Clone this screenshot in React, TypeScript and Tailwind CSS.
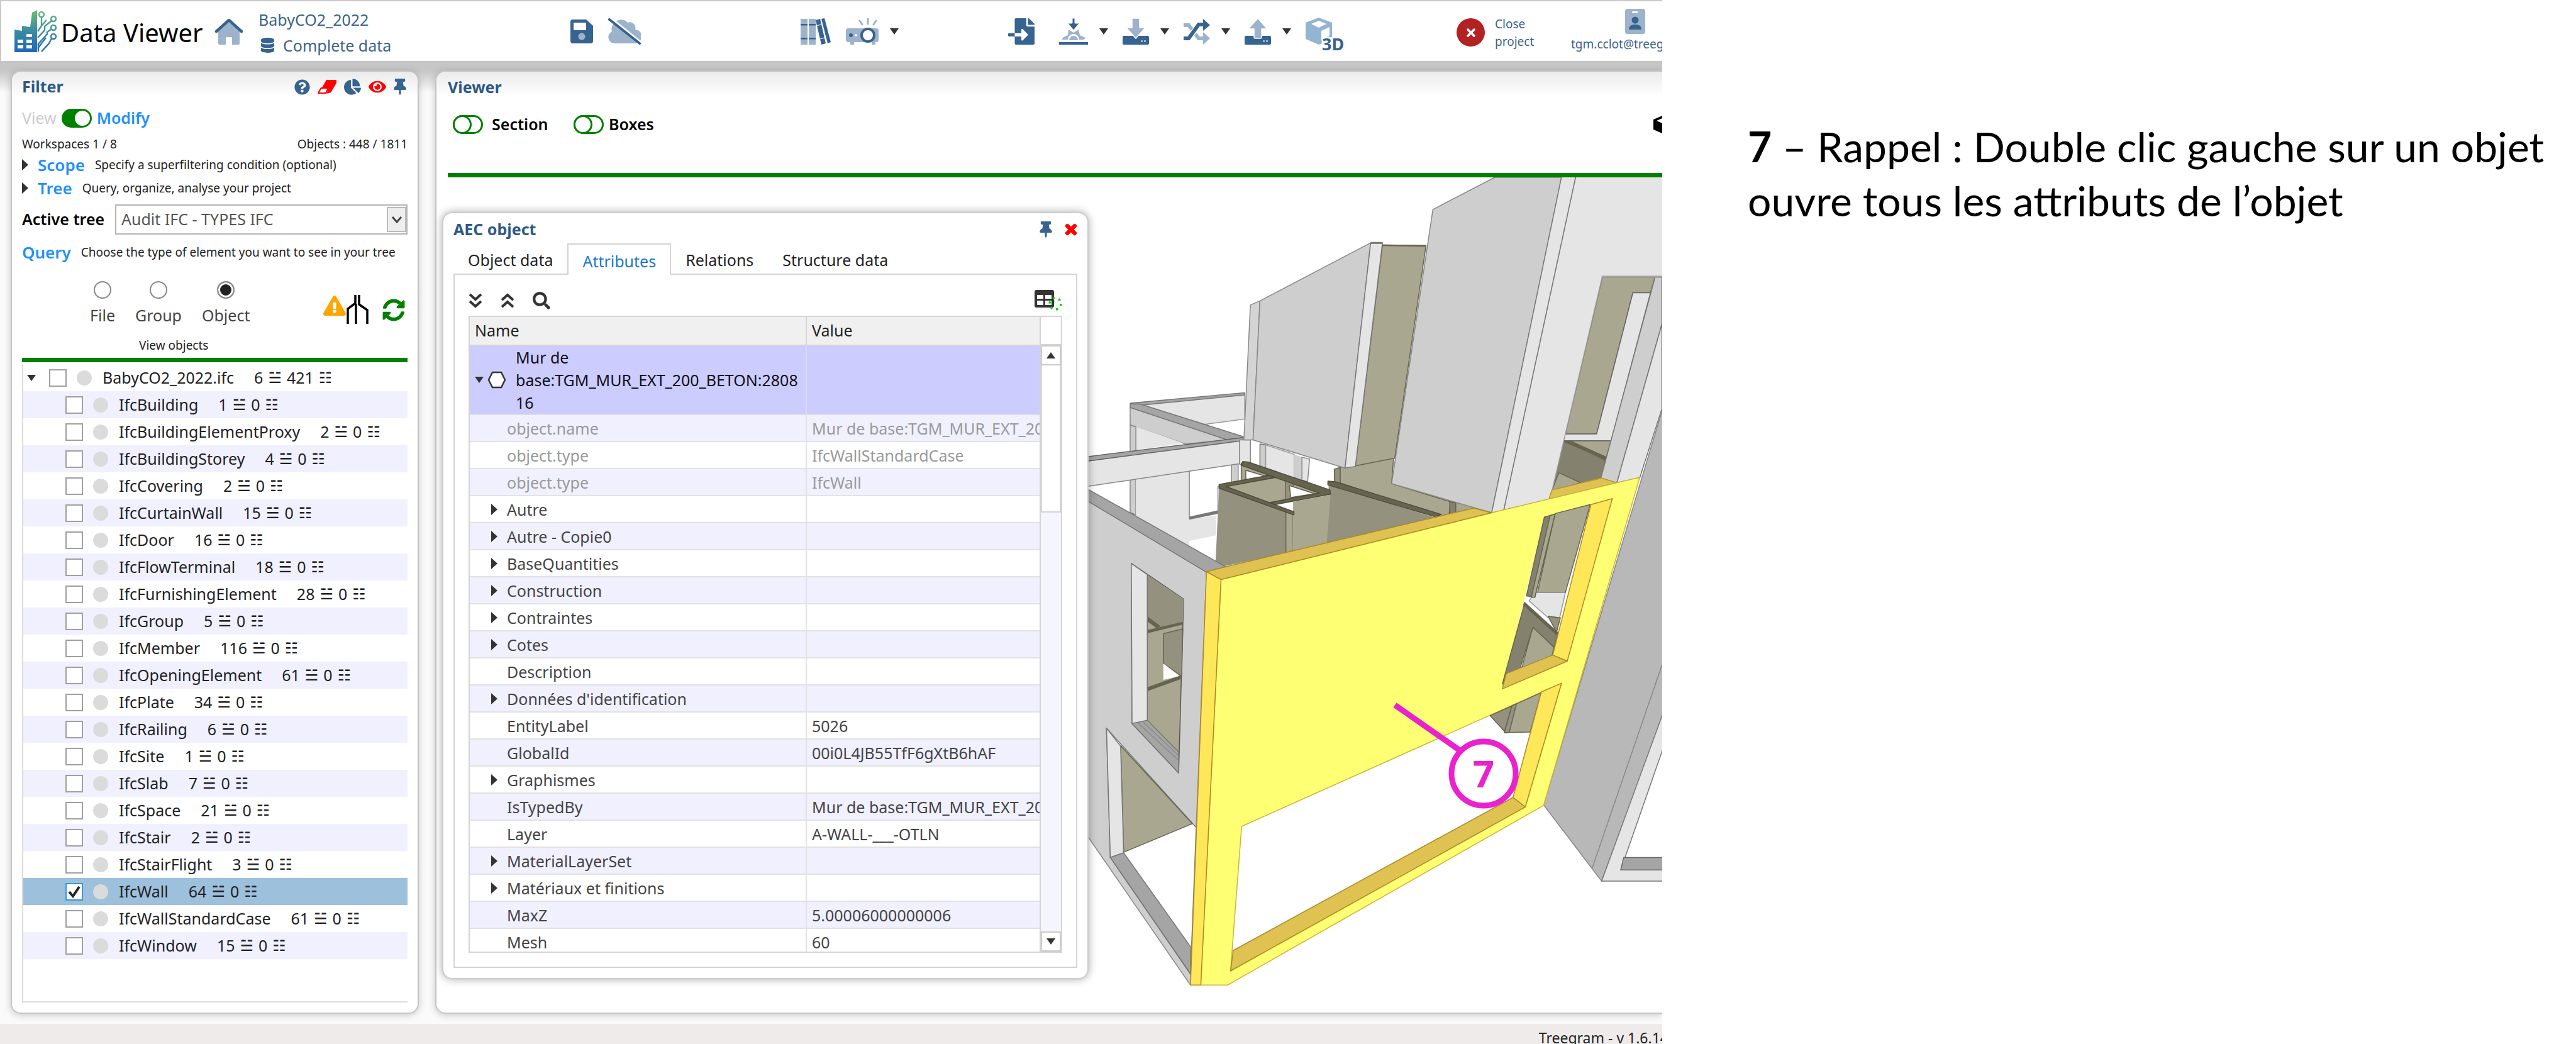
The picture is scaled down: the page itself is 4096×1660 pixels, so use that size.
import React from "react";
import { FaDatabase, FaFileImport, FaSyncAlt, FaQuestionCircle, FaChartPie, FaEye, FaThumbtack, FaExclamationTriangle, FaTimes, FaSearch } from "react-icons/fa";

const DARK = "#36638f";
const LIGHT = "#9db3cb";

/* ---------- icons ---------- */

function Logo() {
  return (
    <svg viewBox="0 0 68 67" className="h-[67px] w-[68px]" aria-hidden="true">
      <defs>
        <linearGradient id="brand" x1="0" y1="0" x2="0" y2="67" gradientUnits="userSpaceOnUse">
          <stop offset="0" stopColor="#6cc06a" />
          <stop offset="0.45" stopColor="#3f8fa0" />
          <stop offset="1" stopColor="#1f66b8" />
        </linearGradient>
      </defs>
      <path fill="url(#brand)" d="M0 31l12 2v-8l13 2L28 4l8-4v67H0z" />
      <path fill="#fff" d="M19 38h9v5h-9zM5 47h9v5H5zM19 47h9v5h-9zM5 56h9v5H5zM19 56h9v5h-9z" />
      <g fill="none" stroke="url(#brand)" strokeWidth="2.4">
        <path d="M37 34l6-9V11M43 25l8-9M37 44l11-12v-6l11-9M37 55l15-17v-3l7-5M37 61l13-17M43 66l12-13 4-8M38 66V52" />
        <circle cx="43" cy="7" r="4" />
        <circle cx="62" cy="14" r="4" />
        <circle cx="62" cy="28" r="4" />
        <circle cx="62" cy="42" r="4" />
      </g>
    </svg>
  );
}

function HomeIcon() {
  return (
    <svg viewBox="0 0 46 42" className="h-[42px] w-[46px]">
      <path fill={LIGHT} d="M6 20L23 6l17 14v20a2 2 0 0 1-2 2H28V30H18v12H8a2 2 0 0 1-2-2z" />
      <path fill="none" stroke={DARK} strokeWidth="4.5" strokeLinecap="round" strokeLinejoin="round" d="M3 21L23 3l20 18" />
    </svg>
  );
}

function SaveIcon() {
  return (
    <svg viewBox="0 0 36 38" className="h-[38px] w-9">
      <path fill={DARK} d="M4 0h21l11 10v24a4 4 0 0 1-4 4H4a4 4 0 0 1-4-4V4a4 4 0 0 1 4-4z" />
      <path fill="#fff" d="M5 5h20v12H5z" />
      <circle cx="18" cy="27" r="5.5" fill={LIGHT} />
    </svg>
  );
}

function CloudOffIcon() {
  return (
    <svg viewBox="0 0 52 42" className="h-[42px] w-[52px]">
      <path fill={LIGHT} d="M10 40a10 10 0 0 1-4-19A13 13 0 0 1 12 6a13 13 0 0 1 19 1 9 9 0 0 1 12 11 11 11 0 0 1-1 22z" />
      <path stroke="#fff" strokeWidth="3" d="M5 0l47 38" />
      <path stroke={DARK} strokeWidth="4" strokeLinecap="round" d="M2 2l48 38" />
    </svg>
  );
}

function BooksIcon() {
  return (
    <svg viewBox="0 0 48 42" className="h-[42px] w-12">
      <path fill={LIGHT} d="M0 1h11v41H0zM13 1h11v41H13z" />
      <path fill={DARK} d="M0 9h11v2.5H0zM13 9h11v2.5H13zM0 31h11v2.5H0zM13 31h11v2.5H13z" />
      <path fill={DARK} d="M24 3l7-2 9 39-7 2z" />
      <path fill={DARK} d="M33 1l5-1 10 38-5 2z" />
      <path stroke="#fff" strokeWidth="1" d="M26 12l6-2M31 33l7-2" />
    </svg>
  );
}

function ProjectorIcon() {
  return (
    <svg viewBox="0 0 52 42" className="h-[42px] w-[52px]">
      <path fill={LIGHT} d="M4 16h44a4 4 0 0 1 4 4v14a4 4 0 0 1-4 4h-1v4h-6v-4H13v4H7v-4H4a4 4 0 0 1-4-4V20a4 4 0 0 1 4-4z" />
      <circle cx="8" cy="27" r="3" fill={DARK} />
      <circle cx="16" cy="27" r="2" fill="#fff" />
      <circle cx="35" cy="27" r="10" fill="#fff" stroke={DARK} strokeWidth="4" />
      <path stroke={LIGHT} strokeWidth="3" strokeLinecap="round" d="M35 1v8M22 4l4 6M48 4l-4 6" />
    </svg>
  );
}

function CompressIcon() {
  return (
    <svg viewBox="0 0 46 42" className="h-[42px] w-[46px]">
      <path fill={LIGHT} d="M15 18l8 5 8-5 2 9 9 4-3 3H32a9 9 0 0 0-18 0H4l3-4 7-3z" />
      <path fill={LIGHT} d="M16 35a7 7 0 0 1 14 0z" />
      <path fill={DARK} stroke="#fff" strokeWidth="1" d="M21 0h4v8h7l-9 11-9-11h7z" />
      <path fill={DARK} d="M0 38h46v4H0z" />
    </svg>
  );
}

function DriveIcon({ up }: { up?: boolean }) {
  return (
    <svg viewBox="0 0 42 42" className="h-[42px] w-[42px]">
      <path fill={DARK} d="M2 28h38a2 2 0 0 1 2 2v10a2 2 0 0 1-2 2H2a2 2 0 0 1-2-2V30a2 2 0 0 1 2-2z" />
      {up ? (
        <path fill={LIGHT} stroke="#fff" strokeWidth="1.5" d="M21 0l15 17h-9v13a2 2 0 0 1-2 2h-8a2 2 0 0 1-2-2V17H6z" />
      ) : (
        <path fill={LIGHT} stroke="#fff" strokeWidth="1.5" d="M17 0h8a2 2 0 0 1 2 2v13h9L21 32 6 15h9V2a2 2 0 0 1 2-2z" />
      )}
      <path fill={LIGHT} d="M29 35h3v3h-3zM34 35h3v3h-3z" />
    </svg>
  );
}

function ShuffleIcon() {
  return (
    <svg viewBox="0 0 42 42" className="h-[42px] w-[42px]">
      <path fill="none" stroke={LIGHT} strokeWidth="6" d="M0 11h8l16 21h8" />
      <path fill={LIGHT} d="M31 22l11 10-11 10z" />
      <path fill="none" stroke="#fff" strokeWidth="9" d="M6 33l20-23" />
      <path fill="none" stroke={DARK} strokeWidth="6" d="M0 32h8l16-22h8" />
      <path fill={DARK} d="M31 1l11 10-11 9z" />
    </svg>
  );
}

function Cube3DIcon() {
  return (
    <svg viewBox="0 0 62 54" className="h-[54px] w-[62px]">
      <path fill="#93b4d3" d="M21 0l21 8v25l-21 10L0 34V8z" />
      <path fill="#fff" d="M21 5l12 5-12 6-12-6zM25 21l13-6v14l-13 7z" />
      <path fill="#fff" d="M25 31h37v23H27z" />
      <text x="26" y="52" fontFamily="'Noto Sans', sans-serif" fontWeight="700" fontSize="27" fill={DARK}>3D</text>
    </svg>
  );
}

function BadgeIcon() {
  return (
    <svg viewBox="0 0 32 40" className="h-10 w-8">
      <rect width="32" height="40" rx="4" fill={LIGHT} />
      <rect x="11" y="4" width="10" height="3" rx="1.5" fill="#fff" />
      <circle cx="16" cy="18" r="5.5" fill={DARK} />
      <path fill={DARK} d="M6 33c0-6 4-8 10-8s10 2 10 8z" />
    </svg>
  );
}

function EraserIcon() {
  return (
    <svg viewBox="0 0 30 22" className="h-[22px] w-[30px]">
      <path fill="#f00" d="M14 0h16l-8 14H6z" />
      <path fill="#fff" stroke="#f00" strokeWidth="2" strokeLinejoin="round" d="M5.500 13H17l-4 8H1z" />
      <path fill="#f00" d="M30 0v5l-9 15-7 2 4-9z" />
    </svg>
  );
}

function PipesIcon() {
  return (
    <svg viewBox="0 0 36 46" className="h-[46px] w-9" fill="none" stroke="#000" strokeWidth="3.5">
      <path d="M15 0v13L3 22v24M16 14v32M21 0v15l13 9v22" />
    </svg>
  );
}

function TableIcon() {
  return (
    <svg viewBox="0 0 44 34" className="h-[34px] w-11">
      <path fill="#333" fillRule="evenodd" d="M3 0h25a3 3 0 0 1 3 3v22a3 3 0 0 1-3 3H3a3 3 0 0 1-3-3V3a3 3 0 0 1 3-3zm1 8v6h10V8zm13 0v6h10V8zM4 17v7h10v-7zm13 0v7h10v-7z" />
      <circle cx="33" cy="22" r="9" fill="none" stroke="#13d313" strokeWidth="3.5" strokeDasharray="3.5 6" />
    </svg>
  );
}

function Chevrons({ up }: { up?: boolean }) {
  return (
    <svg viewBox="0 0 22 26" className="h-[26px] w-[22px]" fill="none" stroke="#333" strokeWidth="4">
      {up ? <path d="M2 12l9-8 9 8M2 23l9-8 9 8" /> : <path d="M2 3l9 8 9-8M2 14l9 8 9-8" />}
    </svg>
  );
}

function Arrow({ dir, className = "" }: { dir: "right" | "down" | "up"; className?: string }) {
  const d = dir === "right" ? "M2 0l10 9-10 9z" : dir === "down" ? "M0 4h14l-7 10z" : "M0 14h14L7 4z";
  return (
    <svg viewBox="0 0 14 18" className={"h-[18px] w-3.5 shrink-0 " + className} fill="#333">
      <path d={d} />
    </svg>
  );
}

function Switch({ label, on }: { label: string; on?: boolean }) {
  return (
    <>
      <input type="checkbox" role="switch" aria-label={label} defaultChecked={on} className="sr-only" />
      <svg viewBox="0 0 48 30" className="h-[30px] w-12 shrink-0">
        <rect x="1.5" y="1.5" width="45" height="27" rx="13.5" fill={on ? "#008000" : "#fff"} stroke="#008000" strokeWidth="3" />
        <circle cx={on ? 33 : 15} cy="15" r={on ? 12 : 13.5} fill="#fff" stroke={on ? "none" : "#008000"} strokeWidth="3" />
      </svg>
    </>
  );
}

/* ---------- header ---------- */

function Tool({ label, children, menu }: { label: string; children: React.ReactNode; menu?: boolean }) {
  return (
    <button type="button" aria-label={label} className="flex items-center gap-[18px]">
      {children}
      {menu && <Arrow dir="down" />}
    </button>
  );
}

function Header() {
  return (
    <header className="flex h-[97px] shrink-0 items-center overflow-hidden border-t-2 border-l-2 border-[#c9c9c9] bg-white text-[#3c648c]">
      <div className="flex w-[905px] shrink-0 items-center">
        <div className="ml-[21px] flex items-center gap-1.5">
          <Logo />
          <span className="w-[241px] pt-1 text-[40px] leading-[48px] whitespace-nowrap text-black">Data Viewer</span>
        </div>
        <button type="button" aria-label="Home" className="mr-[24px] ml-[3px]">
          <HomeIcon />
        </button>
        <div className="pt-1 text-[25px] leading-[41px]">
          <div>BabyCO2_2022</div>
          <div className="flex items-center gap-[14px] pl-1">
            <FaDatabase className="h-6 w-[21px]" color={DARK} />
            Complete data
          </div>
        </div>
      </div>
      <div className="flex w-[366px] shrink-0 items-center gap-6">
        <Tool label="Save"><SaveIcon /></Tool>
        <Tool label="Offline"><CloudOffIcon /></Tool>
      </div>
      <div className="flex w-[330px] shrink-0 items-center gap-6">
        <Tool label="Library"><BooksIcon /></Tool>
        <Tool label="Presentation" menu><ProjectorIcon /></Tool>
      </div>
      <div className="flex w-[713px] shrink-0 items-center gap-[23px]">
        <span className="mr-[16px] flex">
          <Tool label="Import file"><FaFileImport className="h-[42px] w-[42px]" color={DARK} /></Tool>
        </span>
        <Tool label="Compress" menu><CompressIcon /></Tool>
        <Tool label="Download" menu><DriveIcon /></Tool>
        <Tool label="Shuffle" menu><ShuffleIcon /></Tool>
        <Tool label="Upload" menu><DriveIcon up /></Tool>
        <span className="flex pt-2.5">
          <Tool label="3D view"><Cube3DIcon /></Tool>
        </span>
      </div>
      <button type="button" className="flex w-[182px] shrink-0 items-center gap-4 pt-1 text-left text-[19px] leading-7">
        <span className="flex h-[45px] w-[45px] items-center justify-center rounded-full bg-[#b22222]">
          <FaTimes className="h-5 w-5" color="#fff" />
        </span>
        <span>Close<br />project</span>
      </button>
      <div className="min-w-0 flex-1">
        <div className="ml-[86px]"><BadgeIcon /></div>
        <div className="text-[19px] leading-8 whitespace-nowrap">tgm.cclot@treeg</div>
      </div>
    </header>
  );
}

/* ---------- filter panel ---------- */

const TREE: [string, number][] = [
  ["IfcBuilding", 1], ["IfcBuildingElementProxy", 2], ["IfcBuildingStorey", 4], ["IfcCovering", 2],
  ["IfcCurtainWall", 15], ["IfcDoor", 16], ["IfcFlowTerminal", 18], ["IfcFurnishingElement", 28],
  ["IfcGroup", 5], ["IfcMember", 116], ["IfcOpeningElement", 61], ["IfcPlate", 34], ["IfcRailing", 6],
  ["IfcSite", 1], ["IfcSlab", 7], ["IfcSpace", 21], ["IfcStair", 2], ["IfcStairFlight", 3],
  ["IfcWall", 64], ["IfcWallStandardCase", 61], ["IfcWindow", 15],
];

const TREE_FONT = "font-['DejaVu_Sans',sans-serif] text-[24px]";

function TreeRow({ name, count, sub, root, checked }: { name: string; count: number; sub: number; root?: boolean; checked?: boolean }) {
  return (
    <li className={"flex h-[43px] items-center whitespace-nowrap " + (root ? "pl-1.5 " : "pl-[67px] ") + (checked ? "bg-[#9dc0dc]" : "odd:bg-white even:bg-[#f0f0ff]")}>
      {root && <Arrow dir="down" className="mr-[21px]" />}
      <label className="flex items-center">
        <input
          type="checkbox"
          defaultChecked={checked}
          className="peer h-7 w-7 appearance-none border-2 border-[#a0a0a0] bg-white checked:border-[#3a94d6]"
        />
        <svg viewBox="0 0 28 28" className="-ml-7 h-7 w-7 fill-none stroke-[#222] stroke-[4] opacity-0 peer-checked:opacity-100">
          <path d="M6 14l6 7L22 6" />
        </svg>
        <span className="ml-4 h-6 w-6 rounded-full bg-[#dbdbdb]" />
        <span className="ml-[17px]">{name}</span>
      </label>
      <span className="ml-8">{count}</span>
      <span className={"ml-2 " + TREE_FONT}>☱</span>
      <span className="ml-2">{sub}</span>
      <span className={"ml-2 " + TREE_FONT}>☷</span>
    </li>
  );
}

function FilterPanel() {
  return (
    <section className="flex w-[649px] shrink-0 flex-col rounded-[16px] border-2 border-[#c4c4c4] bg-linear-to-b from-[#ebebeb] to-white to-[40px] px-4 pb-4 shadow-[0_2px_12px_#0003]">
      <div className="flex h-12 shrink-0 items-center justify-between">
        <h2 className="text-[25px] font-bold text-[#2c5985]">Filter</h2>
        <div className="flex items-center gap-3 text-[#36638f]">
          <button type="button" aria-label="Help"><FaQuestionCircle className="h-[25px] w-[25px]" /></button>
          <button type="button" aria-label="Clear"><EraserIcon /></button>
          <button type="button" aria-label="Chart"><FaChartPie className="h-[26px] w-[27px]" /></button>
          <button type="button" aria-label="Visibility"><FaEye className="h-[26px] w-[28px]" color="#f00" /></button>
          <button type="button" aria-label="Pin" className="mr-0.5"><FaThumbtack className="h-[26px] w-[20px]" /></button>
        </div>
      </div>
      <label className="flex h-[52px] shrink-0 items-center gap-2 text-[25px]">
        <span className="text-[#ccc]">View</span>
        <Switch label="Modify" on />
        <span className="font-semibold text-[#1e90ff]">Modify</span>
      </label>
      <div className="flex h-[30px] shrink-0 items-center justify-between text-[19px]">
        <span>Workspaces 1 / 8</span>
        <span>Objects : 448 / 1811</span>
      </div>
      <div className="flex h-9 shrink-0 items-center text-[19px]">
        <Arrow dir="right" className="mr-[13px] -ml-0.5" />
        <span className="mr-4 text-[26px] font-semibold text-[#1e90ff]">Scope</span>
        Specify a superfiltering condition (optional)
      </div>
      <div className="flex h-[38px] shrink-0 items-center text-[19px]">
        <Arrow dir="right" className="mr-[13px] -ml-0.5" />
        <span className="mr-4 text-[26px] font-semibold text-[#1e90ff]">Tree</span>
        Query, organize, analyse your project
      </div>
      <div className="flex h-[62px] shrink-0 items-center justify-between text-[25px]">
        <label htmlFor="active-tree" className="font-semibold text-black">Active tree</label>
        <div className="relative w-[465px]">
          <select id="active-tree" className="h-12 w-full appearance-none border-2 border-[#b5b5b5] bg-white pl-2 text-[#555]">
            <option>Audit IFC - TYPES IFC</option>
          </select>
          <span className="pointer-events-none absolute inset-y-1 right-0.5 flex w-[31px] items-center justify-center border-2 border-[#bbb] bg-[#eee]">
            <svg viewBox="0 0 18 12" className="h-3 w-[18px]" fill="none" stroke="#444" strokeWidth="3"><path d="M2 2l7 8 7-8" /></svg>
          </span>
        </div>
      </div>
      <div className="flex h-[42px] shrink-0 items-center text-[19px]">
        <span className="mr-4 text-[26px] font-semibold text-[#1e90ff]">Query</span>
        Choose the type of element you want to see in your tree
      </div>
      <div className="flex h-[147px] shrink-0 items-start justify-between pt-[25px] pl-[108px]">
        <div className="flex flex-col items-center">
          <div className="flex gap-8 text-[25px] text-[#444]" role="radiogroup" aria-label="Element type">
            {["File", "Group", "Object"].map((t) => (
              <label key={t} className="flex flex-col items-center gap-2 leading-9">
                <input
                  type="radio"
                  name="element-type"
                  defaultChecked={t === "Object"}
                  className="h-7 w-7 appearance-none rounded-full border-2 border-[#8a8a8a] bg-white checked:bg-[#222] checked:shadow-[inset_0_0_0_3px_white]"
                />
                {t}
              </label>
            ))}
          </div>
          <div className="mt-4 pl-3 text-[19px] leading-7">View objects</div>
        </div>
        <div className="flex items-start pt-[22px] pr-1">
          <FaExclamationTriangle className="h-[34px] w-9" color="#ffa500" />
          <PipesIcon />
          <button type="button" aria-label="Refresh" className="mt-1.5 ml-[22px]">
            <FaSyncAlt className="h-9 w-9" color="#008000" />
          </button>
        </div>
      </div>
      <div className="h-[7px] shrink-0 bg-[#008000]" />
      <ul className="mt-[3px] min-h-0 flex-1 border-b-2 border-l-2 border-[#dcdcdc] text-[25px] text-[#222]">
        <TreeRow name="BabyCO2_2022.ifc" count={6} sub={421} root />
        {TREE.map(([name, count]) => (
          <TreeRow key={name} name={name} count={count} sub={0} checked={name === "IfcWall"} />
        ))}
      </ul>
    </section>
  );
}

/* ---------- object window ---------- */

type Attr = { name: string; value?: string; open?: boolean; muted?: boolean };

const ATTRS: Attr[] = [
  { name: "object.name", value: "Mur de base:TGM_MUR_EXT_200", muted: true },
  { name: "object.type", value: "IfcWallStandardCase", muted: true },
  { name: "object.type", value: "IfcWall", muted: true },
  { name: "Autre", open: true },
  { name: "Autre - Copie0", open: true },
  { name: "BaseQuantities", open: true },
  { name: "Construction", open: true },
  { name: "Contraintes", open: true },
  { name: "Cotes", open: true },
  { name: "Description" },
  { name: "Données d'identification", open: true },
  { name: "EntityLabel", value: "5026" },
  { name: "GlobalId", value: "00i0L4JB55TfF6gXtB6hAF" },
  { name: "Graphismes", open: true },
  { name: "IsTypedBy", value: "Mur de base:TGM_MUR_EXT_200" },
  { name: "Layer", value: "A-WALL-___-OTLN" },
  { name: "MaterialLayerSet", open: true },
  { name: "Matériaux et finitions", open: true },
  { name: "MaxZ", value: "5.00006000000006" },
  { name: "Mesh", value: "60" },
];

function AttributeTable() {
  return (
    <div className="flex min-h-0 flex-1 border-2 border-[#d4d4d4]">
      <div className="min-w-0 flex-1 overflow-hidden">
        <table className="w-full table-fixed border-collapse text-left">
          <colgroup>
            <col className="w-[535px]" />
            <col />
          </colgroup>
          <thead>
            <tr className="h-[45px] border-b-2 border-[#d4d4d4] bg-[#f0f0f0] text-[#222]">
              <th className="border-r-2 border-[#d4d4d4] pl-2 font-normal">Name</th>
              <th className="pl-2 font-normal">Value</th>
            </tr>
          </thead>
          <tbody>
            <tr className="h-[109px] border-b-2 border-[#dcdce4] bg-[#ccccff] text-[#111]">
              <td className="border-r-2 border-[#dcdcf0] pl-2">
                <div className="flex items-center">
                  <Arrow dir="down" />
                  <svg viewBox="0 0 30 28" className="ml-1.5 h-7 w-[30px] shrink-0">
                    <path d="M8 2h14l6 12-6 12H8L2 14z" fill="#fff" stroke="#333" strokeWidth="2.5" />
                  </svg>
                  <span className="ml-[15px] leading-9 whitespace-nowrap">
                    Mur de<br />base:TGM_MUR_EXT_200_BETON:2808<br />16
                  </span>
                </div>
              </td>
              <td />
            </tr>
            {ATTRS.map((a, i) => (
              <tr key={i} className={"h-[43px] border-b-2 border-[#e2e2e2] odd:bg-white even:bg-[#f0f0ff] " + (a.muted ? "text-[#999]" : "text-[#444]")}>
                <td className="border-r-2 border-[#e2e2e2] pl-8 leading-9">
                  <div className="flex items-center gap-[13px]">
                    {a.open ? <Arrow dir="right" /> : <span className="w-3.5" />}
                    {a.name}
                  </div>
                </td>
                <td className="overflow-hidden pl-2 leading-9 whitespace-nowrap">{a.value}</td>
              </tr>
            ))}
          </tbody>
        </table>
      </div>
      <div className="flex w-[34px] shrink-0 flex-col border-l-2 border-[#d4d4d4]">
        <div className="h-[45px] shrink-0 border-b-2 border-[#d4d4d4]" />
        <div className="flex min-h-0 flex-1 flex-col bg-[#f5f5ff]">
          <button type="button" aria-label="Scroll up" className="flex h-8 shrink-0 items-center justify-center border-2 border-[#ccc] bg-white"><Arrow dir="up" /></button>
          <div className="h-[234px] shrink-0 border-2 border-t-0 border-[#d4d4d4] bg-white" />
          <div className="flex-1" />
          <button type="button" aria-label="Scroll down" className="flex h-8 shrink-0 items-center justify-center border-2 border-[#ccc] bg-white"><Arrow dir="down" /></button>
        </div>
      </div>
    </div>
  );
}

function ObjectWindow() {
  const tab = "border-b-2 border-[#d4d4d4] px-[23px]";
  return (
    <div className="absolute top-[223px] bottom-[53px] left-[9px] flex w-[1028px] flex-col rounded-[16px] border-2 border-[#cdcdcd] bg-white px-4 pb-4 text-[25px] shadow-[0_0_14px_#0005]">
      <div className="flex h-12 shrink-0 items-center justify-between pt-1">
        <h2 className="font-bold text-[#2c5985]">AEC object</h2>
        <div className="flex items-center gap-5">
          <button type="button" aria-label="Pin window"><FaThumbtack className="h-[26px] w-5" color={DARK} /></button>
          <button type="button" aria-label="Close window"><FaTimes className="h-6 w-5" color="#f00" stroke="#f00" strokeWidth="40" /></button>
        </div>
      </div>
      <div role="tablist" className="flex h-[50px] shrink-0 leading-[52px] whitespace-nowrap text-[#222]">
        <button type="button" role="tab" aria-selected="false" className={tab}>Object data</button>
        <button type="button" role="tab" aria-selected="true" className="border-2 border-b-0 border-[#d4d4d4] px-[22px] text-[#1a78d0]">Attributes</button>
        <button type="button" role="tab" aria-selected="false" className={tab}>Relations</button>
        <button type="button" role="tab" aria-selected="false" className={tab}>Structure data</button>
        <span className="flex-1 border-b-2 border-[#d4d4d4]" />
      </div>
      <div className="flex min-h-0 flex-1 flex-col border-2 border-t-0 border-[#d4d4d4] px-[22px] pb-[22px]">
        <div className="flex h-[65px] shrink-0 items-center gap-[29px] pt-4">
          <button type="button" aria-label="Expand all"><Chevrons /></button>
          <button type="button" aria-label="Collapse all"><Chevrons up /></button>
          <button type="button" aria-label="Search"><FaSearch className="h-7 w-7" color="#333" /></button>
          <button type="button" aria-label="Add column" className="ml-auto"><TableIcon /></button>
        </div>
        <AttributeTable />
      </div>
    </div>
  );
}

/* ---------- 3D scene ---------- */

const G1 = "#e5e5e5", G2 = "#cecece", G3 = "#a5a5a5", G4 = "#b8b8b8";
const O1 = "#a9a790", O2 = "#94917e", O3 = "#84826f", O4 = "#66644f";
const Y1 = "#ffff73", Y2 = "#ffe75a", Y3 = "#dfc251", W = "#ffffff";

/* painted back to front: points, fill, outline */
const FACES: [string, string, string][] = [
  ["165,853 445,820 445,908 340,928", G1, "#999"],
  ["145,850 445,812 445,820 170,858", G3, "#777"],
  ["145,865 405,985 290,1000 145,930", G2, "#888"],
  ["160,935 285,997 160,1022", G1, "none"],
  ["145,930 160,937 160,1260 145,1250", G2, "#888"],
  ["145,853 170,853 440,972 440,985 400,985 145,866", G3, "#777"],
  ["160,1128 300,1098 300,1275 370,1262 370,1335 300,1355 300,1385 160,1262", G1, "none"],
  ["300,1098 410,1076 410,1160 375,1155 375,1248 300,1275", W, "#888"],
  ["300,1266 375,1243 375,1256 300,1277", "#777", "none"],
  ["410,1074 428,1072 428,1150 410,1150", G2, "#888"],
  ["35,1062 432,985 432,1072 35,1155", G1, "#888"],
  ["35,1046 440,976 455,985 35,1062", G3, "#666"],
  ["432,985 460,985 460,1080 432,1075", G1, "#888"],
  ["485,1000 500,1003 500,1090 485,1085", G2, "#777"],
  ["500,1003 575,1038 575,1125 500,1092", G1, "#999"],
  ["575,1038 595,1048 595,1132 575,1124", G2, "none"],
  ["595,1048 615,1055 610,1138 595,1132", G1, "#888"],

  ["695,1085 835,1050 830,1145 985,1212 980,1268 940,1262 695,1142", O1, O4],
  ["680,1092 695,1085 695,1145 680,1138", O2, O4],
  ["985,1210 1075,1238 1000,1254 980,1262", O1, O4],
  ["982,1212 998,1216 998,1252 982,1258", O3, O4],
  ["665,1148 940,1268 940,1290 655,1375 665,1185", O2, "none"],
  ["663,1136 682,1138 960,1258 942,1266 663,1150", O4, "#4f4d3d"],

  ["436,1070 455,1078 520,1108 436,1138", O1, O4],
  ["448,1096 500,1118 448,1130", W, O4],
  ["395,1155 548,1118 640,1180 518,1220", O1, O4],
  ["552,1126 572,1135 572,1200 552,1206", O2, O4],
  ["562,1152 628,1182 566,1196", W, O4],
  ["378,1160 570,1258 553,1400 368,1455", O2, "none"],
  ["553,1250 572,1255 570,1392 553,1400", O1, O4],
  ["572,1212 670,1186 660,1362 570,1392", O1, "none"],
  ["378,1148 535,1108 548,1116 396,1156 574,1248 574,1260 378,1162", O4, "#4f4d3d"],
  ["440,1064 455,1066 668,1168 670,1184 525,1222 512,1214 640,1180 436,1078", O4, "#4f4d3d"],

  ["460,490 485,475 467,985 443,985", "#d4d4d4", "#888"],
  ["485,475 775,262 708,1088 467,985", G2, "#888"],
  ["806,270 920,272 838,1052 735,1080", O1, O4],
  ["775,262 806,262 735,1082 708,1088", G1, "#777"],
  ["775,259 806,259 806,266 775,266", "#777", "none"],
  ["806,268 920,270 920,276 806,274", O4, "none"],

  ["1280,988 1405,988 1390,1058", O1, O4],
  ["1280,990 1390,1055 1380,1130 1325,1145 1250,1170 1265,1060", O3, O4],
  ["1268,1105 1325,1142 1250,1170", O1, O4],
  ["1280,986 1300,988 1392,1046 1388,1060", O4, "none"],
  ["1382,388 1520,388 1508,445 1462,445 1367,963 1285,963", O1, O4],
  ["1462,445 1508,445 1405,988 1280,988 1282,963 1367,963", G1, "#666"],
  ["1520,388 1538,388 1538,560 1420,1142 1378,1125 1405,985", G2, "#777"],
  ["1538,560 1538,870 1480,1124 1420,1142", G1, "#777"],
  ["1312,20 1540,20 1540,385 1382,385 1245,1202 1123,1246", G1, "#999"],
  ["1380,383 1538,383 1538,390 1380,390", G3, "none"],
  ["938,140 1100,22 1275,22 1092,1252 830,1145", G2, "#888"],
  ["1275,20 1312,20 1123,1246 1092,1252", G1, "#777"],

  ["1540,870 1540,2000 1380,2603 1228,2323", G4, "#888"],
  ["1380,2603 1540,1990 1540,2120 1430,2562 1540,2562 1540,2603", G1, "#777"],
  ["1438,2516 1540,2516 1540,2562 1430,2562", G3, "#666"],

  ["35,1208 345,1468 318,2406 303,2984 35,2441", G2, "#888"],
  ["35,1166 395,1450 345,1470 35,1210", G3, "#777"],
  ["148,1438 285,1568 272,2206 150,2025", O1, "#555"],
  ["190,1479 285,1568 283,1655 225,1672 190,1632", O2, "none"],
  ["190,1682 283,1652 283,1662 190,1694", O4, "none"],
  ["190,1632 225,1668 215,1676 190,1650", O4, "none"],
  ["232,1695 283,1678 280,1851 232,1805", O2, O4],
  ["232,1805 275,1851 232,1865", W, "none"],
  ["190,1892 278,1848 278,1862 190,1906", O4, "none"],
  ["148,1438 190,1479 190,2015 150,2025", G1, "#777"],
  ["150,2025 190,2013 272,2129 272,2206", G3, "#777"],
  ["83,2042 318,2406 303,2944 93,2516", W, "#777"],
  ["120,2106 308,2392 128,2497", O1, O4],
  ["83,2042 120,2108 128,2499 93,2516", G1, "#777"],
  ["93,2516 128,2499 303,2843 303,2942", G3, "#777"],

  ["1242,1202 1250,1168 1380,1125 1420,1142", Y3, "#b89a2c"],
  ["383,1497 1092,1252 1480,1122 1228,2325 400,2984 330,2984", Y1, "#c8b43c"],
  ["345,1468 395,1450 1045,1235 1092,1252 383,1497", Y3, "#a98c25"],
  ["345,1468 383,1497 330,2984 303,2984", Y2, "#b08a20"],

  ["1230,1268 1408,1200 1290,1796 1120,1898", W, "none"],
  ["1258,1255 1350,1222 1285,1545 1212,1545", O1, O4],
  ["1205,1545 1285,1545 1270,1637 1240,1637 1190,1575", G1, "#999"],
  ["1240,1632 1272,1637 1262,1690", O2, O4],
  ["1178,1585 1265,1699 1255,1750 1200,1672 1160,1850 1120,1880", O3, O4],
  ["1178,1578 1266,1690 1264,1704 1174,1590", O4, "none"],
  ["1200,1672 1255,1745 1250,1780 1170,1825", O1, O4],
  ["1230,1268 1258,1257 1205,1562 1183,1557", O3, O4],
  ["1245,1262 1258,1257 1205,1562 1196,1562", O1, O4],
  ["1352,1222 1408,1200 1290,1796 1252,1774", Y2, "#a98c25"],
  ["1130,1842 1252,1774 1290,1796 1120,1898", Y3, "#a98c25"],

  ["437,2402 1275,1877 1180,2331 408,2932", W, "#c8b43c"],
  ["1088,1996 1150,1957 1130,2060", O2, O4],
  ["1145,1960 1222,1911 1193,2056 1125,2058", O1, O4],
  ["1145,1960 1157,1952 1138,2058 1125,2058", O2, O4],
  ["1222,1909 1275,1877 1180,2331 1148,2296", Y2, "#a98c25"],
  ["415,2857 1148,2296 1180,2331 408,2932", Y3, "#a98c25"],
];

function Scene() {
  return (
    <svg viewBox="0 0 934 1286" className="ml-auto w-[934px] shrink-0" role="img" aria-label="3D model">
      <g transform="scale(0.607 0.4336) translate(0 -22)">
        {FACES.map(([points, fill, stroke], i) => (
          <polygon key={i} points={points} fill={fill} stroke={stroke} strokeWidth="1.5" strokeLinejoin="round" vectorEffect="non-scaling-stroke" />
        ))}
        <g fill="none" stroke="#888" strokeWidth="1.5">
          <path vectorEffect="non-scaling-stroke" d="M1355 2556L1538 1811" />
          <path vectorEffect="non-scaling-stroke" d="M165 2022L272 2160M178 2018L272 2142" />
        </g>
      </g>
      <path stroke="#ea22cd" strokeWidth="9" d="M509 839l103 72" />
      <circle cx="650" cy="948" r="51" fill="#fff" stroke="#ea22cd" strokeWidth="9" />
      <text x="650" y="970" textAnchor="middle" fontFamily="'Noto Sans', sans-serif" fontWeight="700" fontSize="60" fill="#ea22cd">7</text>
    </svg>
  );
}

function ViewerPanel() {
  return (
    <section className="relative flex min-w-0 flex-1 flex-col rounded-l-[16px] border-2 border-r-0 border-[#c4c4c4] bg-linear-to-b from-[#ebebeb] to-white to-[40px] pl-[18px] shadow-[0_2px_12px_#0003]">
      <h2 className="h-12 shrink-0 text-[25px] leading-[48px] font-bold text-[#2c5985]">Viewer</h2>
      <div className="flex h-[113px] shrink-0 items-start overflow-hidden pt-[18px] pl-2 text-[25px] font-semibold text-black">
        <label className="flex h-9 w-[192px] shrink-0 items-center gap-[14px]"><Switch label="Section" />Section</label>
        <label className="flex h-9 items-center gap-2"><Switch label="Boxes" />Boxes</label>
        <button type="button" aria-label="View cube" className="mt-1 ml-auto w-3.5 overflow-hidden">
          <svg viewBox="0 0 28 28" className="h-7 w-7">
            <path fill="#000" d="M14 0l14 6v16l-14 6-14-6V6z" />
            <path fill="#fff" d="M14 4l9 4-9 4-9-4z" />
          </svg>
        </button>
      </div>
      <div className="h-[7px] shrink-0 bg-[#008000]" />
      <div className="flex min-h-0 flex-1 items-start overflow-hidden">
        <Scene />
      </div>
      <ObjectWindow />
    </section>
  );
}

export default function App() {
  return (
    <div className="grid h-screen grid-cols-[2643fr_1453fr] overflow-hidden bg-white font-['Noto_Sans',sans-serif] text-[#222]">
      <div className="flex min-w-0 flex-col overflow-hidden">
        <Header />
        <main className="flex min-h-0 flex-1 gap-[26px] bg-[linear-gradient(#c6c6c6_15px,#fafafa_50px)] pt-[15px] pb-4 pl-[17px]">
          <FilterPanel />
          <ViewerPanel />
        </main>
        <footer className="flex h-8 shrink-0 justify-end overflow-hidden bg-[#efebeb] text-[23px] leading-[44px] whitespace-nowrap">
          <span className="-mr-2.5">Treegram - v 1.6.1​4</span>
        </footer>
      </div>
      <aside className="pt-[190px] pl-[136px] font-[Lato,sans-serif] text-[66px] leading-[86px] text-black">
        <p><strong>7</strong> – Rappel : Double clic gauche sur un objet ouvre tous les attributs de l’objet</p>
      </aside>
    </div>
  );
}
